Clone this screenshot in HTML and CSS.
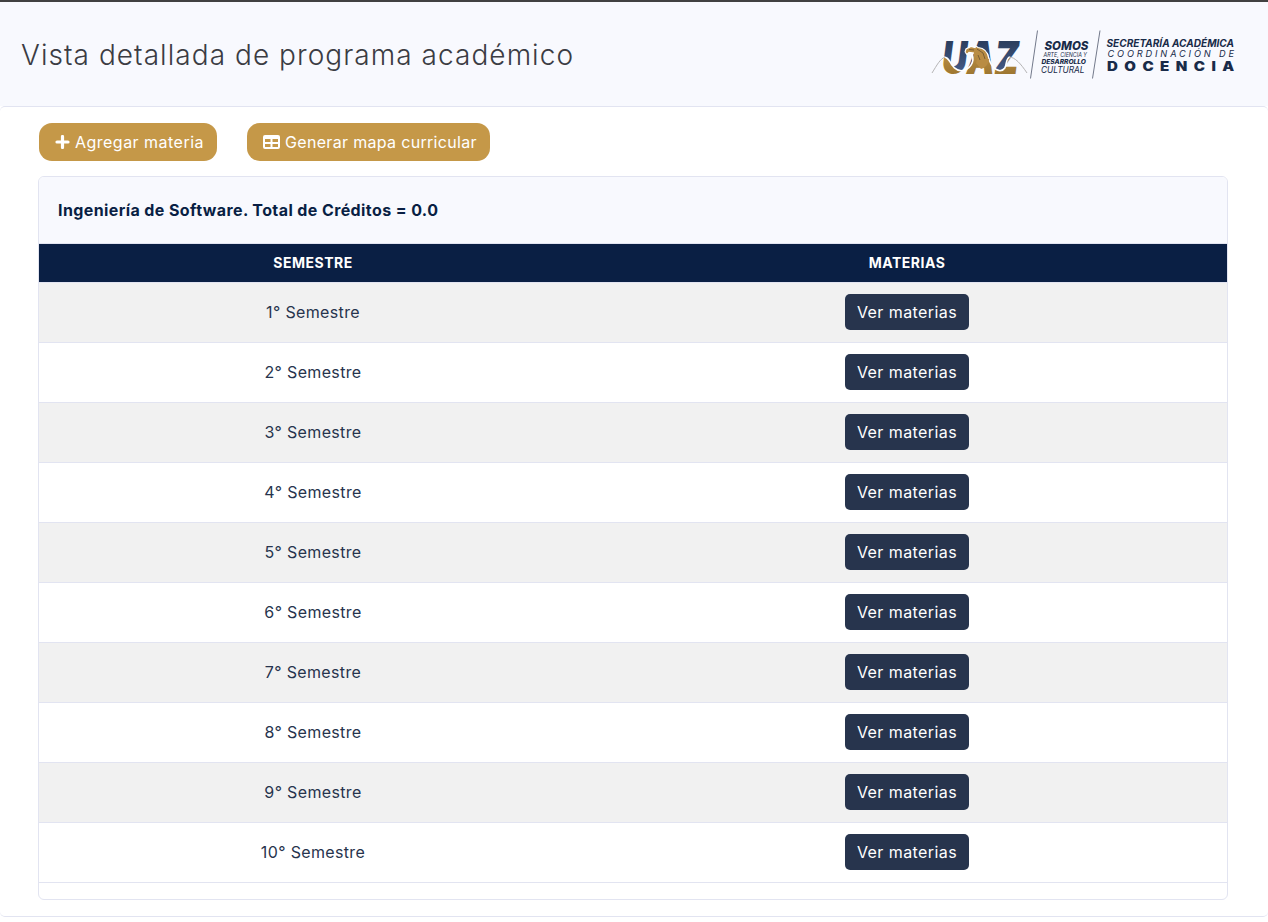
FILE: index.html
```
<!DOCTYPE html>
<html lang="es">
<head>
<meta charset="utf-8">
<title>Vista detallada de programa académico</title>
<link rel="stylesheet" href="styles.css">
</head>
<body>
<header class="page-header">
  <h1 class="page-title">Vista detallada de programa académico</h1>
  <svg class="brand" width="310" height="56" viewBox="931 27 310 56" role="img" aria-label="UAZ Secretaría Académica">
    <defs>
      <linearGradient id="navy" x1="0" y1="0" x2="0" y2="1"><stop offset="0" stop-color="#263957"/><stop offset="1" stop-color="#4a5f8d"/></linearGradient>
      <linearGradient id="gold" x1="0" y1="0" x2="0" y2="1"><stop offset="0" stop-color="#c09349"/><stop offset="1" stop-color="#96702b"/></linearGradient>
      <!-- navy above the wave, gold below it -->
      <pattern id="two-tone" patternUnits="userSpaceOnUse" x="931" y="27" width="110" height="56" viewBox="931 27 110 56">
        <rect x="931" y="36" width="110" height="42" fill="url(#navy)"/>
        <path d="M931 57H943C951 56 950 70 961 70.700C970 70 973 62 974 52L984 49C990 65 994 70 1000 70.700C1009 70 1004 58 1010 57H1041V80H931Z" fill="url(#gold)"/>
      </pattern>
    </defs>
    <text class="brand-mark" x="942" y="73.500" font-size="45.400" textLength="77" lengthAdjust="spacingAndGlyphs" fill="url(#two-tone)">UAZ</text>
    <path d="M943 57C951 56 950 70 961 70.700C970 70 975 62 972 54M987 53C990 65 994 70 1000 70.700C1009 70 1004 58 1010 57" fill="none" stroke="#fff" stroke-width="1.600"/>
    <path d="M965 52L966 49L971 46.500L975 47.500L976 46L978 47.500C984 48 988 52 989 59C989 64 985 68 981 69L976 63L978 57L974 53L969 52.500L967 54.500Z" fill="#b98c43"/>
    <path d="M965 52L966 49L971 46.500L975 47.500L976 46L978 47.500C984 48 988 52 989 59M965 52L967 54.500L969 52.500L974 53" fill="none" stroke="#fff" stroke-width="1.200"/>
    <path d="M969 49.500L974 50M977 49L983 53L985 59M978 55L980 60" stroke="#67502f" stroke-width=".8" fill="none"/>
    <path d="M932 73C937 65 940 59 945 57M1009 57C1015 57 1021 64 1027 73" fill="none" stroke="#b5b4b5" stroke-width="1"/>
    <path d="M1037.500 30.500L1030.500 78.500M1100 30.500L1092.500 78.500" stroke="#73798b" stroke-width="1"/>
    <g class="brand-text">
      <text x="1044.500" y="50" font-size="12" font-weight="800" textLength="44" lengthAdjust="spacingAndGlyphs">SOMOS</text>
      <text x="1043.500" y="57" font-size="5.500" textLength="43.500" lengthAdjust="spacingAndGlyphs">ARTE, CIENCIA Y</text>
      <text x="1041.500" y="64" font-size="6.200" font-weight="800" textLength="44.500" lengthAdjust="spacingAndGlyphs">DESARROLLO</text>
      <text x="1041" y="73" font-size="8.800" textLength="43.500" lengthAdjust="spacingAndGlyphs">CULTURAL</text>
      <text x="1106.500" y="47" font-size="10" font-weight="700" textLength="127.500" lengthAdjust="spacingAndGlyphs">SECRETARÍA ACADÉMICA</text>
      <text x="1107.500" y="57" font-size="9.200" textLength="126.500" lengthAdjust="spacing">COORDINACIÓN DE</text>
      <text class="upright" transform="translate(1107 71.300) scale(1.200 1)" x="0" y="0" font-size="12.500" font-weight="900" textLength="106" lengthAdjust="spacing">DOCENCIA</text>
    </g>
  </svg>
</header>
<main class="panel">
  <div class="actions">
    <button class="action add"><svg width="15" height="14" viewBox="0 0 15 14"><path d="M7.500 1.500v11M2 7h11" stroke="#fff" stroke-width="3.200" stroke-linecap="round"/></svg><span>Agregar materia</span></button>
    <button class="action map"><svg width="17" height="14" viewBox="0 0 17 14"><path fill-rule="evenodd" d="M2 0H15Q17 0 17 2V12Q17 14 15 14H2Q0 14 0 12V2Q0 0 2 0ZM2 4V7H7.500V4ZM9.500 4V7H15V4ZM2 9V12H7.500V9ZM9.500 9V12H15V9Z" fill="#fff"/></svg><span>Generar mapa curricular</span></button>
  </div>
  <section class="card">
    <h2 class="card-title"><span>Ingeniería de Software. Total de Créditos = 0.0</span></h2>
    <table class="semesters">
      <colgroup><col class="semester-col"><col></colgroup>
      <thead><tr><th>SEMESTRE</th><th>MATERIAS</th></tr></thead>
      <tbody>
        <tr><td>1° Semestre</td><td><button class="view">Ver materias</button></td></tr>
        <tr><td>2° Semestre</td><td><button class="view">Ver materias</button></td></tr>
        <tr><td>3° Semestre</td><td><button class="view">Ver materias</button></td></tr>
        <tr><td>4° Semestre</td><td><button class="view">Ver materias</button></td></tr>
        <tr><td>5° Semestre</td><td><button class="view">Ver materias</button></td></tr>
        <tr><td>6° Semestre</td><td><button class="view">Ver materias</button></td></tr>
        <tr><td>7° Semestre</td><td><button class="view">Ver materias</button></td></tr>
        <tr><td>8° Semestre</td><td><button class="view">Ver materias</button></td></tr>
        <tr><td>9° Semestre</td><td><button class="view">Ver materias</button></td></tr>
        <tr><td>10° Semestre</td><td><button class="view">Ver materias</button></td></tr>
      </tbody>
    </table>
  </section>
</main>
</body>
</html>
```
FILE: styles.css
```
* { box-sizing: border-box; }
body { margin: 0; background: #fff; color: #27344d; font: 400 16px/24px Inter, "Liberation Sans", sans-serif; overflow: hidden; }
.page-header { display: flex; align-items: center; justify-content: space-between; height: 106px; padding: 2px 27px 0 21px; border-top: 2px solid #414141; background: #f8f9fe; }
.page-title { margin: 0; font-size: 28px; line-height: 34px; font-weight: 300; letter-spacing: 1.05px; color: #3b3c43; white-space: nowrap; }
.brand { overflow: visible; }
.brand-mark { font-weight: 900; font-style: italic; }
.brand-text { fill: #192b49; font-style: italic; }
.upright { font-style: normal; }
.panel { height: 811px; padding: 16px 39px 0 37px; border: 1px solid #e2e4f1; border-width: 1px 0; border-radius: 5px; background: #fff; }
.actions { display: flex; gap: 30px; padding-left: 2px; margin-bottom: 15px; }
.action { display: flex; align-items: center; height: 38px; gap: 5px; padding: 0 0 0 16px; border: 0; border-radius: 13px; background: #c59848; color: #fff; font: inherit; white-space: nowrap; }
.action svg { flex: none; }
.add { width: 178px; letter-spacing: .48px; }
.map { width: 243px; letter-spacing: .32px; }
.card { width: 1190px; height: 724px; margin-left: 1px; border: 1px solid #e2e4f1; border-radius: 6px; overflow: hidden; }
.card-title { display: flex; align-items: center; height: 67px; margin: 0; padding-left: 19px; border-bottom: 1px solid #e2e4f1; background: #f8f9fe; color: #091f44; font-size: 16px; font-weight: 700; letter-spacing: .4px; }
.semesters { width: 100%; table-layout: fixed; border-collapse: separate; border-spacing: 0; text-align: center; }
.semester-col { width: 548px; }
th { height: 38px; padding: 0; background: #0a1f44; color: #fff; font-size: 14px; line-height: 20px; font-weight: 700; letter-spacing: .5px; }
td { height: 60px; padding: 0 0 1px; border-top: 1px solid #e2e4f1; vertical-align: middle; letter-spacing: .35px; }
tbody tr:nth-child(odd) { background: #f1f1f1; }
tbody tr:last-child td { height: 61px; border-bottom: 1px solid #e2e4f1; }
.view { display: block; width: 124px; height: 36px; margin: 0 auto; padding: 0; border: 0; border-radius: 5px; background: #27344d; color: #fff; font: inherit; letter-spacing: .42px; }
```
